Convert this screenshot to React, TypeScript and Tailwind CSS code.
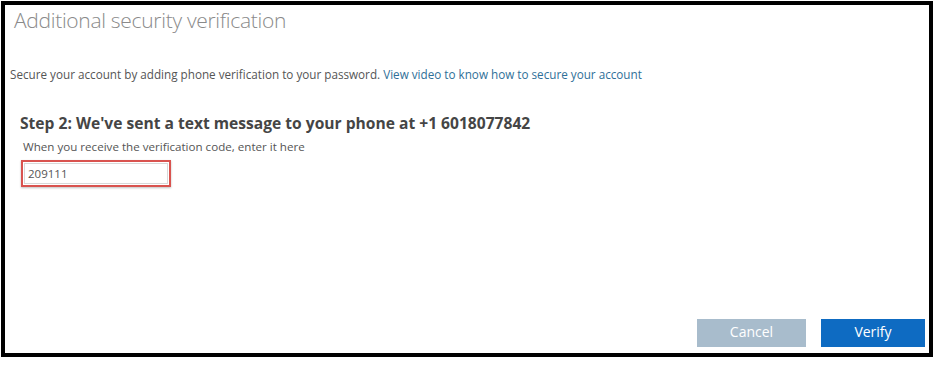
import React from "react";

export default function App() {
  return (
    <div className="w-[935px] h-[366px] bg-white" style={{ fontFamily: '"Open Sans", "Noto Sans", sans-serif' }}>
      <div className="ml-[1px] mt-[1px] w-[932px] h-[356px] border-4 border-black flex flex-col">
        <h1 className="ml-[9px] mt-[1px] text-[21px] leading-[28px] font-light text-[#8a8a8a] tracking-[-0.3px]">
          Additional security verification
        </h1>
        <p className="ml-[5px] mt-[32px] text-[11.7px] leading-[16px] text-[#555]">
          Secure your account by adding phone verification to your password.{" "}
          <span className="text-[#2f6f98]">View video to know how to secure your account</span>
        </p>
        <h2 className="ml-[15px] mt-[30px] text-[15.6px] leading-[22px] font-bold text-[#454545]">
          Step 2: We&apos;ve sent a text message to your phone at +1 6018077842
        </h2>
        <p className="ml-[18px] mt-[5px] text-[11.6px] leading-[16px] text-[#555]">
          When you receive the verification code, enter it here
        </p>
        <div className="ml-[16px] mt-[5px] w-[150px] h-[27px] border-2 border-[#d9534f] p-[1px] shadow-[0_1px_2px_rgba(0,0,0,0.25)]">
          <div className="w-full h-full border border-[#d8d8d8] flex items-center pl-[3px] text-[11.5px] text-[#555]">
            209111
          </div>
        </div>
        <div className="flex-1" />
        <div className="flex justify-end gap-[15px] mr-[4px] mb-[6px]">
          <button className="w-[109px] h-[28px] pb-[3px] bg-[#a8bccc] text-white text-[14px] leading-[20px]">Cancel</button>
          <button className="w-[104px] h-[28px] pb-[3px] bg-[#0e6bc2] text-white text-[14px] leading-[20px]">Verify</button>
        </div>
      </div>
    </div>
  );
}
